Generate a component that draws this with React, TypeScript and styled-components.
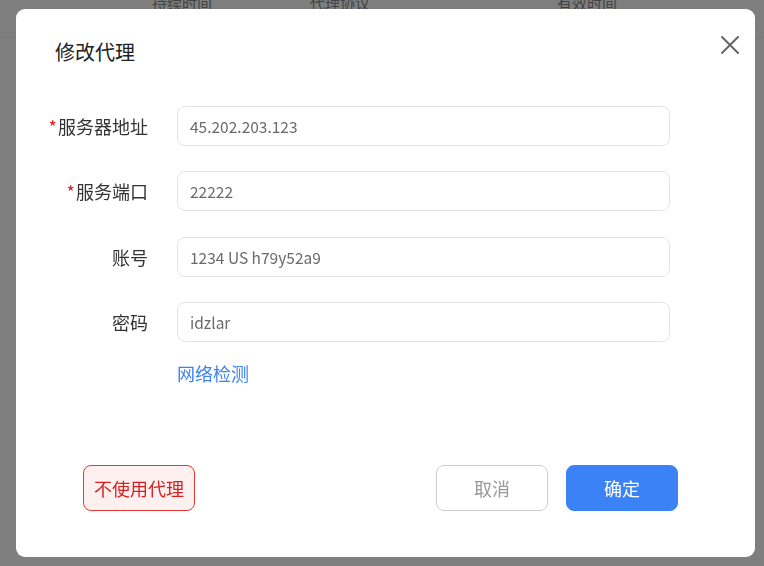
import React from "react";
import styled, { createGlobalStyle } from "styled-components";

const Global = createGlobalStyle`
  html, body { margin: 0; padding: 0; background: #fff; }
  body { font-family: "Noto Sans CJK SC", "Noto Sans", sans-serif; }
  * { box-sizing: border-box; }
`;

const Page = styled.div`
  width: 764px;
  height: 566px;
  overflow: hidden;
  background: #fff;
`;

const TableHead = styled.div`
  display: flex;
  height: 46px;
  margin-top: -7px;
  border-bottom: 1px solid #f0f0f0;
  background: #fcfcfc;
`;

const HeadCell = styled.div<{ $w: number }>`
  width: ${(p) => p.$w}px;
  font-size: 15px;
  line-height: 20px;
  color: #888;
  text-align: center;
`;

const Overlay = styled.div`
  position: fixed;
  inset: 0;
  background: rgba(0, 0, 0, 0.5);
  display: flex;
  align-items: flex-start;
  padding: 9px 0 0 16px;
`;

const Dialog = styled.div`
  width: 739px;
  height: 548px;
  background: #fff;
  border-radius: 9px;
  display: flex;
  flex-direction: column;
`;

const Header = styled.div`
  display: flex;
  align-items: center;
  justify-content: space-between;
  padding: 30px 11px 0 39px;
  height: 56px;
`;

const Title = styled.div`
  font-size: 20px;
  line-height: 26px;
  color: #222;
`;

const Close = styled.button`
  border: none;
  background: none;
  padding: 0;
  width: 28px;
  height: 28px;
  display: flex;
  align-items: center;
  justify-content: center;
  cursor: pointer;
  margin-top: -14px;
`;

const Form = styled.div`
  display: grid;
  grid-template-columns: 132px 493px;
  column-gap: 29px;
  row-gap: 25.3px;
  margin-top: 41px;
  align-items: center;
`;

const Label = styled.label`
  text-align: right;
  font-size: 18px;
  color: #333;
  line-height: 24px;
`;

const Req = styled.span`
  color: #e02020;
  margin-right: 1px;
`;

const Input = styled.input`
  height: 40px;
  width: 100%;
  border: 1px solid #e3e3e6;
  border-radius: 8px;
  padding: 0 12px;
  font-family: "Noto Sans CJK SC", "Noto Sans", sans-serif;
  font-size: 15.5px;
  color: #6a6a6a;
  outline: none;
  background: #fff;
`;

const Link = styled.a`
  font-size: 18px;
  color: #3d83f2;
  text-decoration: none;
  line-height: 24px;
  margin-top: -6px;
`;

const Footer = styled.div`
  margin-top: auto;
  display: flex;
  align-items: center;
  padding: 0 77px 46px 67px;
`;

const Btn = styled.button<{ $kind: "danger" | "ghost" | "primary" }>`
  width: 112px;
  height: 46px;
  border-radius: 8px;
  font-family: "Noto Sans CJK SC", "Noto Sans", sans-serif;
  font-size: 18px;
  cursor: pointer;
  border: 1px solid
    ${(p) => (p.$kind === "danger" ? "#e53935" : p.$kind === "ghost" ? "#cfcfcf" : "#3b82f6")};
  background: ${(p) => (p.$kind === "danger" ? "#fff0f0" : p.$kind === "ghost" ? "#fff" : "#3b82f6")};
  color: ${(p) => (p.$kind === "danger" ? "#d81e1e" : p.$kind === "ghost" ? "#999" : "#fff")};
`;

const Spacer = styled.div`
  flex: 1;
`;

const Gap = styled.div`
  width: 18px;
`;

const fields = [
  { label: "服务器地址", req: true, value: "45.202.203.123" },
  { label: "服务端口", req: true, value: "22222" },
  { label: "账号", req: false, value: "1234 US h79y52a9" },
  { label: "密码", req: false, value: "idzlar" },
];

export default function App() {
  return (
    <Page>
      <Global />
      <TableHead>
        <HeadCell $w={151}>{""}</HeadCell>
        <HeadCell $w={62}>持续时间</HeadCell>
        <HeadCell $w={97}>{""}</HeadCell>
        <HeadCell $w={60}>代理协议</HeadCell>
        <HeadCell $w={186}>{""}</HeadCell>
        <HeadCell $w={62}>有效时间</HeadCell>
      </TableHead>
      <Overlay>
        <Dialog>
          <Header>
            <Title>修改代理</Title>
            <Close aria-label="close">
              <svg width="20" height="20" viewBox="0 0 20 20">
                <path d="M2 2 L18 18 M18 2 L2 18" stroke="#666" strokeWidth="2" strokeLinecap="round" />
              </svg>
            </Close>
          </Header>
          <Form>
            {fields.map((f) => (
              <React.Fragment key={f.label}>
                <Label>
                  {f.req && <Req>*</Req>}
                  {f.label}
                </Label>
                <Input defaultValue={f.value} />
              </React.Fragment>
            ))}
            <div />
            <Link>网络检测</Link>
          </Form>
          <Footer>
            <Btn $kind="danger">不使用代理</Btn>
            <Spacer />
            <Btn $kind="ghost">取消</Btn>
            <Gap />
            <Btn $kind="primary">确定</Btn>
          </Footer>
        </Dialog>
      </Overlay>
    </Page>
  );
}
